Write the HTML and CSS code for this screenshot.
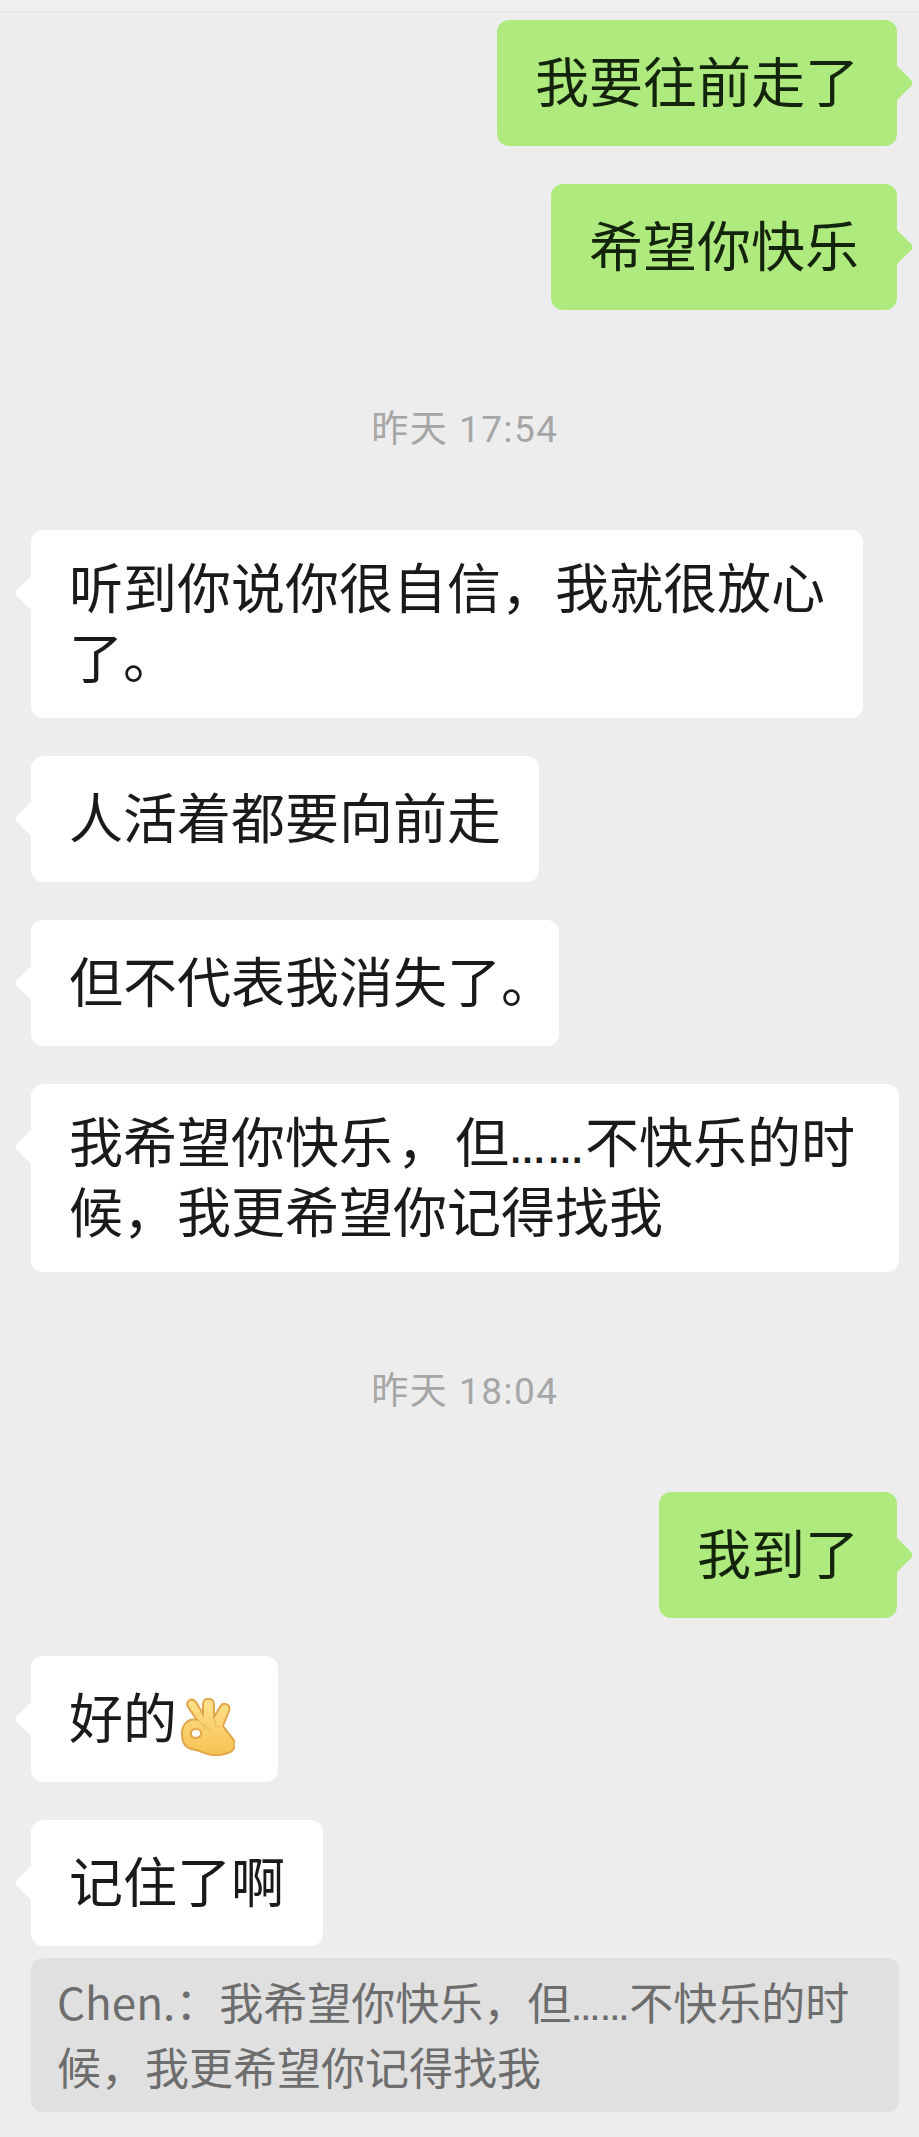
FILE: index.html
```html
<!DOCTYPE html>
<html lang="zh-CN">
<head>
  <meta charset="UTF-8">
  <meta name="viewport" content="width=device-width, initial-scale=1.0">
  <title>聊天记录</title>
  <link rel="stylesheet" href="styles.css">
</head>
<body>
  <div class="top-line"></div>

  <main class="chat">
    <div class="bubble mine">我要往前走了</div>
    <div class="bubble mine">希望你快乐</div>

    <div class="time">昨天 17:54</div>

    <div class="bubble theirs multi">听到你说你很自信，我就很放心<br>了。</div>
    <div class="bubble theirs">人活着都要向前走</div>
    <div class="bubble theirs">但不代表我消失了<span class="end-mark">。</span></div>
    <div class="bubble theirs multi wide">我希望你快乐<span class="comma">，</span>但<span class="dots">……</span>不快乐的时<br>候，我更希望你记得找我</div>

    <div class="time">昨天 18:04</div>

    <div class="bubble mine">我到了</div>
    <div class="bubble theirs">好的<svg class="emoji" viewBox="0 0 54 58" role="img" aria-label="OK">
        <defs>
          <linearGradient id="hand" x1="0" y1="0" x2="0" y2="1">
            <stop offset="0" stop-color="#fde28c"/>
            <stop offset="1" stop-color="#f6c252"/>
          </linearGradient>
        </defs>
        <path fill="url(#hand)" stroke="#e2a64a" stroke-width="2" fill-rule="evenodd" d="M1 37C0 26 8 20 16 22L7 9C4 3 11 -1 15 4L22 16L22 6C22 -1 33 -1 33 6L33 19L39 9C42 3 50 6 48 13L42 28L52 41C56 47 53 53 47 55C40 58 28 58 21 54C17 52 14 52 10 51C4 49 1 44 1 37ZM10 37C11 41 18 41 20 37C21 33 18 31 15 31C12 31 9 33 10 37Z"/>
        <path fill="none" stroke="#eab957" stroke-width="1.2" stroke-linecap="round" d="M25 25C24 29 27 32 30 32M34 22C33 27 36 29 38 29M17 23C20 24 23 27 23 31"/>
      </svg></div>
    <div class="bubble theirs">记住了啊</div>
  </main>

  <div class="quote">Chen.：我希望你快乐，但<span class="quote-dots">……</span>不快乐的时<br>候，我更希望你记得找我</div>
</body>
</html>
```

FILE: styles.css
```css
body {
  font-family: "Noto Sans CJK SC", "Noto Sans", sans-serif;
  background-color: #ededed;
  margin: 0;
  padding: 0;
  height: 2137px;
  overflow: hidden;
}

.top-line {
  height: 11px;
  border-bottom: 1px solid #e3e3e3;
  background-color: #f0f0f0;
}

.chat {
  display: flex;
  flex-direction: column;
  gap: 38px;
  padding: 8px 20px 0 31px;
}

.bubble {
  position: relative;
  padding: 25px 38px 31px;
  font-size: 54px;
  line-height: 70px;
  color: #1a1a1a;
  background-color: #fff;
  border-radius: 12px;
  white-space: nowrap;
  width: fit-content;
}

.bubble::after {
  content: "";
  position: absolute;
  top: 45px;
  width: 17px;
  height: 36px;
}

.multi {
  padding-top: 21px;
  padding-bottom: 27px;
}

.theirs {
  align-self: flex-start;
}

.theirs::after {
  left: -16px;
  background-color: #fff;
  clip-path: polygon(100% 0, 6% 44%, 6% 56%, 100% 100%);
}

.wide {
  padding-right: 44px;
}

.mine {
  align-self: flex-end;
  margin-right: 2px;
  color: #14240c;
  background-color: #aeea7e;
}

.mine::after {
  right: -16px;
  background-color: #aeea7e;
  clip-path: polygon(0 0, 94% 44%, 94% 56%, 0 100%);
}

.end-mark {
  margin-right: -34px;
}

.comma {
  margin-left: 4px;
  margin-right: 4px;
}

.dots {
  font-family: "Liberation Sans", sans-serif;
  font-weight: 700;
  font-size: 37px;
  letter-spacing: 1px;
  line-height: 0;
}

.time {
  margin: 57px 0 37px;
  text-align: center;
  font-family: Roboto, "Noto Sans CJK SC", sans-serif;
  font-size: 37px;
  line-height: 50px;
  letter-spacing: 1.5px;
  color: #a6a6a6;
}

.emoji {
  width: 54px;
  height: 58px;
  margin: -14px 5px -14px 4px;
  vertical-align: -3px;
}

.quote {
  margin: 12px 20px 0 31px;
  padding: 11px 26px 13px;
  font-size: 44px;
  line-height: 65px;
  color: #6d6d6d;
  background-color: #e0e0e0;
  border-radius: 12px;
  white-space: nowrap;
}

.quote-dots {
  font-family: "Liberation Sans", sans-serif;
  font-weight: 700;
  font-size: 29px;
  line-height: 0;
}
```
